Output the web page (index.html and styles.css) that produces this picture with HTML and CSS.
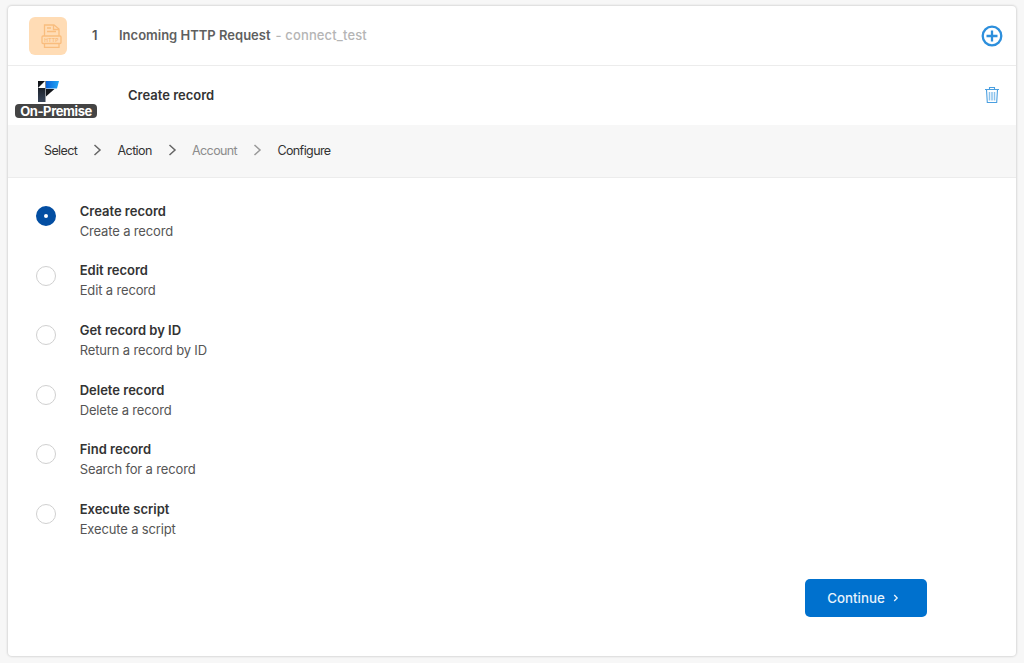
FILE: index.html
```html
<!DOCTYPE html>
<html lang="en">
<head>
<meta charset="utf-8">
<title>Create record</title>
<link rel="stylesheet" href="styles.css">
</head>
<body>
<main class="card">
  <header class="step-row">
    <div class="app-tile">
      <svg class="http-icon" viewBox="0 0 24 24" fill="none" stroke="#f9bd7e" stroke-width="1.300">
        <path d="M6.500 12V1h9.500l5 4v7"/>
        <path d="M15.500 1v4.500h5.500"/>
        <path d="M9 4h4M9 7.500h9"/>
        <rect x="4" y="12" width="19" height="7.500" rx="1"/>
        <path d="M6.500 19.500v4h14.500v-4"/>
        <text class="http-text" x="13.500" y="17.800">HTTP</text>
      </svg>
    </div>
    <span class="step-num">1</span>
    <span class="step-title">Incoming HTTP Request</span>
    <span class="step-sub">- connect_test</span>
    <svg class="row-action plus" viewBox="0 0 22 22" fill="none" stroke="#2d8fdc" stroke-width="2.300">
      <circle cx="11" cy="11" r="9.300"/>
      <path d="M11 5.500v11M5.500 11h11"/>
    </svg>
  </header>

  <section class="action-row">
    <div class="logo-box">
      <svg class="logo" viewBox="0 0 21 21">
        <defs>
          <linearGradient id="col" x1="0" y1="0" x2="0" y2="1">
            <stop offset="0" stop-color="#0c0e12"/>
            <stop offset="1" stop-color="#39465a"/>
          </linearGradient>
          <linearGradient id="blue" x1="0" y1="0" x2="1" y2="0">
            <stop offset="0" stop-color="#0a63d8"/>
            <stop offset="1" stop-color="#22a6f5"/>
          </linearGradient>
        </defs>
        <rect x="0" y="0" width="7.500" height="21" fill="url(#col)"/>
        <path d="M0 7L7 0V7z" fill="#fff"/>
        <path d="M8 0H21L19 7.500H8z" fill="url(#blue)"/>
        <path d="M8 8H16.500L8 15.500z" fill="#14171c"/>
      </svg>
      <span class="premise">On-Premise</span>
    </div>
    <span class="action-title">Create record</span>
    <svg class="row-action trash" viewBox="0 0 16 18" fill="none" stroke="#4a9fe0" stroke-width="1.100">
      <path d="M1 3.500h14M5.500 3.500V1.500h5v2"/>
      <path d="M2.500 3.500l.8 13h9.400l.8-13"/>
      <path d="M5.500 6v8.500M8 6v8.500M10.500 6v8.500" stroke-width="1.500" stroke="#8cc3ec"/>
    </svg>
  </section>

  <nav class="crumbs">
    <span class="crumb">Select</span>
    <svg class="chev" viewBox="0 0 9 12" fill="none" stroke="#666" stroke-width="1.500"><path d="M1.500 1l5.500 5-5.500 5"/></svg>
    <span class="crumb">Action</span>
    <svg class="chev" viewBox="0 0 9 12" fill="none" stroke="#666" stroke-width="1.500"><path d="M1.500 1l5.500 5-5.500 5"/></svg>
    <span class="crumb muted">Account</span>
    <svg class="chev" viewBox="0 0 9 12" fill="none" stroke="#999" stroke-width="1.500"><path d="M1.500 1l5.500 5-5.500 5"/></svg>
    <span class="crumb">Configure</span>
  </nav>

  <section class="options">
    <div class="option">
      <span class="radio checked"></span>
      <div class="option-text"><div class="option-title">Create record</div><div class="option-desc">Create a record</div></div>
    </div>
    <div class="option">
      <span class="radio"></span>
      <div class="option-text"><div class="option-title">Edit record</div><div class="option-desc">Edit a record</div></div>
    </div>
    <div class="option">
      <span class="radio"></span>
      <div class="option-text"><div class="option-title">Get record by ID</div><div class="option-desc">Return a record by ID</div></div>
    </div>
    <div class="option">
      <span class="radio"></span>
      <div class="option-text"><div class="option-title">Delete record</div><div class="option-desc">Delete a record</div></div>
    </div>
    <div class="option">
      <span class="radio"></span>
      <div class="option-text"><div class="option-title">Find record</div><div class="option-desc">Search for a record</div></div>
    </div>
    <div class="option">
      <span class="radio"></span>
      <div class="option-text"><div class="option-title">Execute script</div><div class="option-desc">Execute a script</div></div>
    </div>
  </section>

  <footer class="actions">
    <button class="continue" type="button">Continue
      <svg class="btn-chev" viewBox="0 0 6 8" fill="none" stroke="#e8f3fc" stroke-width="1.300"><path d="M1.200 1l3 3-3 3"/></svg>
    </button>
  </footer>
</main>
</body>
</html>
```
FILE: styles.css
```css
* { box-sizing: border-box; }
html, body { height: 100%; }
body {
  margin: 0;
  padding: 6px 8px 7px 8px;
  background: #f7f7f7;
  font-family: Inter, "Noto Sans", "Liberation Sans", sans-serif;
  font-size: 13px;
  color: #333;
  overflow: hidden;
}
.card {
  height: 650px;
  background: #fff;
  border-radius: 4px;
  box-shadow: 0 0 2px 1px rgba(0, 0, 0, .12);
  display: flex;
  flex-direction: column;
  overflow: hidden;
}
.step-row {
  height: 60px;
  flex: none;
  display: flex;
  align-items: center;
  padding-left: 21px;
  border-bottom: 1px solid #ececec;
  color: #666;
}
.app-tile {
  width: 38px;
  height: 38px;
  background: #ffdcb5;
  border-radius: 6px;
  display: flex;
  align-items: center;
  justify-content: center;
}
.http-icon { width: 24px; height: 24px; margin-left: 3px; }
.http-text {
  font-size: 5px;
  font-weight: 700;
  fill: #f9bd7e;
  stroke: none;
  text-anchor: middle;
  letter-spacing: .2px;
}
.step-num { margin: 0 0 2px 25px; font-weight: 600; color: #555; }
.step-title { margin: 0 0 2px 21.500px; font-weight: 600; color: #5f5f5f; }
.step-sub { margin: 0 0 2px 5px; color: #b5b5b5; font-weight: 500; letter-spacing: .14px; }
.row-action { margin-left: auto; flex: none; }
.plus { width: 22px; height: 22px; margin-right: 13px; }
.trash { width: 16px; height: 18px; margin-right: 16px; margin-bottom: 1px; }
.action-row {
  height: 59px;
  flex: none;
  display: flex;
  align-items: center;
  padding-left: 7px;
}
.logo-box {
  width: 82px;
  height: 36px;
  margin-top: 9px;
  flex: none;
  display: flex;
  flex-direction: column;
  align-items: flex-start;
  position: relative;
}
.logo { width: 21px; height: 21px; flex: none; margin: -1px 0 0 23px; }
.premise {
  position: absolute;
  left: 0;
  bottom: 0;
  width: 82px;
  height: 14px;
  background: #444;
  border-radius: 4px;
  color: #fff;
  font-size: 13px;
  font-weight: 700;
  line-height: 14px;
  text-align: center;
  letter-spacing: -.4px;
}
.action-title { margin: 0 0 2px 31px; font-weight: 600; color: #333; }
.crumbs {
  height: 53px;
  flex: none;
  display: flex;
  align-items: center;
  padding: 0 0 2px 36px;
  background: #f7f7f7;
  border-bottom: 1px solid #ececec;
  font-size: 12.500px;
  letter-spacing: -.6px;
}
.crumb { color: #333; }
.crumb.muted { color: #8c8c8c; }
.chev { width: 9px; height: 12px; margin: 0 15.300px 0 16px; flex: none; }
.options {
  padding: 22.800px 0 0 28px;
  display: flex;
  flex-direction: column;
}
.option {
  height: 59.600px;
  flex: none;
  display: flex;
  align-items: flex-start;
}
.radio {
  width: 20px;
  height: 20px;
  margin-top: 5.200px;
  border-radius: 50%;
  border: 1px solid #d0d0d0;
  background: #fff;
  flex: none;
}
.radio.checked {
  border: 8px solid #034ea2;
  background: #fff;
}
.option-text { margin-left: 23.700px; line-height: 20px; }
.option-title { font-weight: 600; color: #333; }
.option-desc { color: #555; letter-spacing: -.15px; }
.actions {
  margin-top: auto;
  display: flex;
  justify-content: flex-end;
  padding: 0 89px 39px 0;
}
.continue {
  width: 122px;
  height: 38px;
  border: 0;
  border-radius: 5px;
  background: #0071ce;
  color: #e8f3fc;
  font: 500 13.300px Inter, "Noto Sans", sans-serif;
  display: flex;
  align-items: center;
  justify-content: center;
  gap: 8px;
  padding: 0 6px 1px 0;
}
.btn-chev { width: 6px; height: 8px; }
```
